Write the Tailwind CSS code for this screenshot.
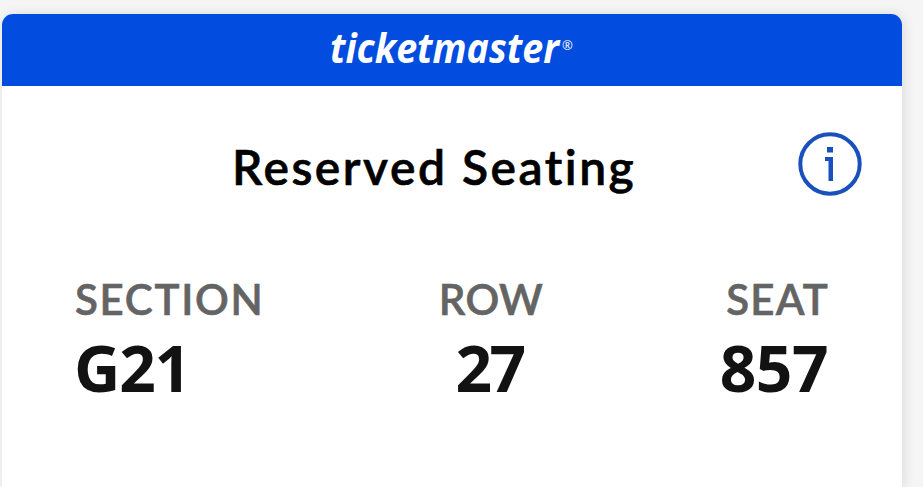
<!DOCTYPE html>
<html lang="en">
<head>
    <meta charset="UTF-8">
    <meta name="viewport" content="width=device-width, initial-scale=1.0">
    <title>Ticket</title>
    <script src="https://cdn.jsdelivr.net/npm/@tailwindcss/browser@4"></script>
</head>
<body class="bg-[#f5f5f5] h-screen overflow-hidden pt-[14px] pl-0.5 font-['Lato','Liberation_Sans',sans-serif]">
    <div class="w-[900px] h-[473px] bg-white rounded-t-[11px] shadow-[2px_0_12px_rgba(0,0,0,0.1)]">
        <div class="h-[72px] bg-[#024ddf] text-white rounded-t-[11px] flex justify-center">
            <svg class="w-[250px] h-[72px] overflow-visible" viewBox="0 0 250 72">
                <text x="3" y="49" textLength="229" lengthAdjust="spacingAndGlyphs" fill="currentColor" font-family="Open Sans" font-size="42" font-weight="700" font-style="italic">ticketmaster</text>
                <text x="235" y="36" fill="currentColor" font-family="Open Sans" font-size="13">®</text>
            </svg>
        </div>

        <div class="h-[166px] pl-[230px] pr-10 flex justify-between">
            <h1 class="mt-[51px] text-[48px] leading-[60px] font-semibold tracking-[2.5px] text-black whitespace-nowrap [-webkit-text-stroke:0.6px_#000]">Reserved Seating</h1>
            <svg class="mt-[46px] w-16 h-16 shrink-0" viewBox="0 0 64 64" fill="none">
                <circle cx="32" cy="32" r="29.7" stroke="#1a50bb" stroke-width="4"/>
                <path d="M29 15h6v5.500h-6zM27 25h8v24h-4.500V29H27z" fill="#1a50bb"/>
            </svg>
        </div>

        <!-- seat details -->
        <div class="px-[74px] pt-5 flex justify-between whitespace-nowrap">
            <div class="w-[186px]">
                <p class="-ml-px text-[42px] leading-[54px] font-semibold tracking-[1.7px] text-[#646464] [-webkit-text-stroke:0.6px_#646464]">SECTION</p>
                <p class="-ml-0.5 text-[64px] leading-[84px] font-bold tracking-[-1.2px] text-[#121212] font-['Open_Sans',sans-serif]">G21</p>
            </div>
            <div class="w-[102px] flex flex-col items-center">
                <p class="-ml-0.5 text-[42px] leading-[54px] font-semibold tracking-[0.3px] text-[#646464] [-webkit-text-stroke:0.6px_#646464]">ROW</p>
                <p class="-ml-[5px] text-[64px] leading-[84px] font-bold tracking-[-2.5px] text-[#121212] font-['Open_Sans',sans-serif]">27</p>
            </div>
            <div class="w-[106px] flex flex-col items-end">
                <p class="-mr-px text-[42px] leading-[54px] font-semibold tracking-[1.2px] text-[#646464] [-webkit-text-stroke:0.6px_#646464]">SEAT</p>
                <p class="text-[64px] leading-[84px] font-bold tracking-[-0.5px] text-[#121212] font-['Open_Sans',sans-serif]">857</p>
            </div>
        </div>
    </div>
</body>
</html>
